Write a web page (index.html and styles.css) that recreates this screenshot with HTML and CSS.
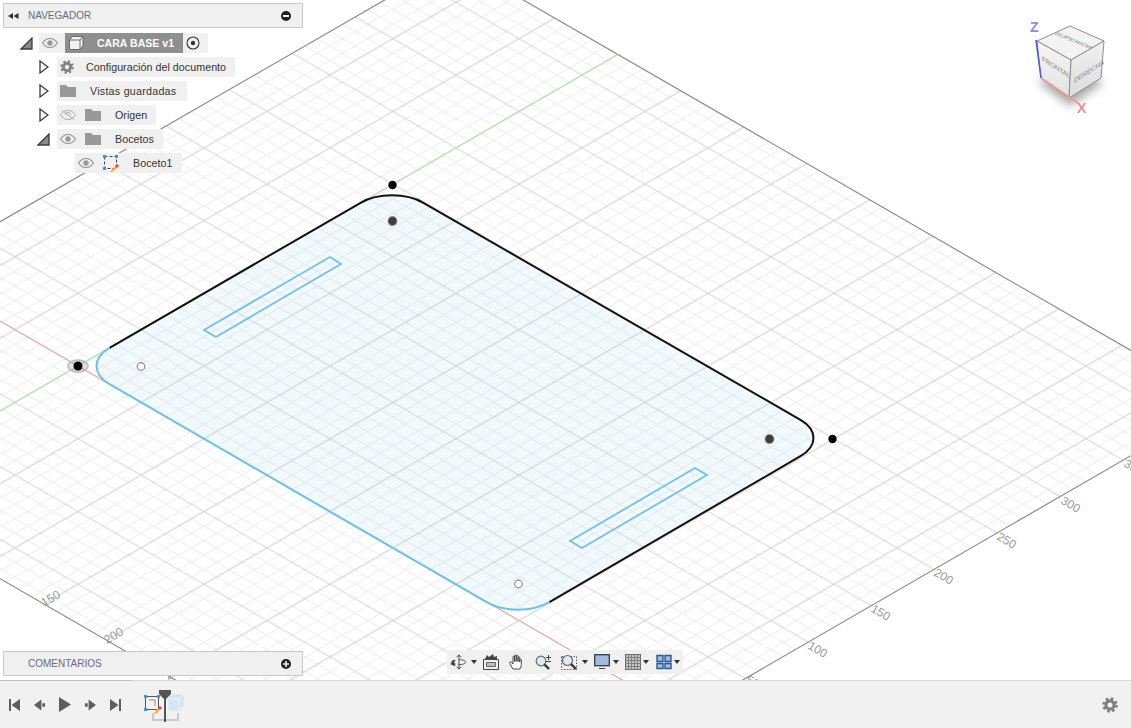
FILE: index.html
```html
<!DOCTYPE html>
<html lang="es">
<head>
<meta charset="utf-8">
<title>CARA BASE v1</title>
<link rel="stylesheet" href="styles.css">
</head>
<body>
<div class="app">
  <main class="viewport">
    <svg class="scene" viewBox="0 0 1131 680" xmlns="http://www.w3.org/2000/svg">
      <defs>
        <pattern id="grid" patternUnits="userSpaceOnUse" width="50" height="50" patternTransform="matrix(1.26 .7274 1.26 -.7274 78 366)">
          <path class="minor" d="M10 0V50M20 0V50M30 0V50M40 0V50M0 10H50M0 20H50M0 30H50M0 40H50"/>
          <path class="major" d="M0 0V50M50 0V50M0 0H50M0 50H50"/>
        </pattern>
      </defs>
      <polygon class="plane" points="-309,400 454,-40 1222,403 459,844"/>
      <polygon class="plane-edge" points="-309,400 454,-40 1222,403 459,844"/>
      <line class="axis-green" x1="-20" y1="422.5" x2="618" y2="54.5"/>
      <line class="axis-red" x1="-20" y1="309.5" x2="682" y2="714.5"/>
      <g class="grid-labels">
        <text transform="translate(44 607) rotate(-30)">150</text>
        <text transform="translate(107 644) rotate(-30)">200</text>
        <text transform="translate(168 680) rotate(-30)">250</text>
        <text transform="translate(807 648) rotate(30)">100</text>
        <text transform="translate(870 611) rotate(30)">150</text>
        <text transform="translate(933 575) rotate(30)">200</text>
        <text transform="translate(996 539) rotate(30)">250</text>
        <text transform="translate(1060 503) rotate(30)">300</text>
        <text transform="translate(1123 466) rotate(30)">350</text>
        <text transform="translate(745 682) rotate(30)">50</text>
      </g>
      <path class="sheet" d="M360.6 202.8A44.5 25.7 0 0 1 423.4 202.8L800.4 419.8A44.5 25.7 0 0 1 800.4 456.2L549.4 602.2A44.5 25.7 0 0 1 486.6 602.2L109.6 384.2A44.5 25.7 0 0 1 109.6 347.8Z"/>
      <path class="edge-black" d="M109.6 347.8L360.6 202.8A44.5 25.7 0 0 1 423.4 202.8L800.4 419.8A44.5 25.7 0 0 1 800.4 456.2L549.4 602.2"/>
      <path class="edge-blue" d="M549.4 602.2A44.5 25.7 0 0 1 486.6 602.2L109.6 384.2A44.5 25.7 0 0 1 109.6 347.8"/>
      <polygon class="slot" points="330,257 341,264 216,337 204,330"/>
      <polygon class="slot" points="695,468 707,475 582,548 570,541"/>
      <ellipse class="halo" cx="78" cy="366" rx="10" ry="6"/>
      <circle class="pt-black" cx="78" cy="366" r="4.500"/>
      <circle class="pt-black" cx="392.500" cy="185" r="4.200"/>
      <circle class="pt-black" cx="832.500" cy="439" r="4.200"/>
      <circle class="pt-dark" cx="392.500" cy="221" r="4.500"/>
      <circle class="pt-dark" cx="769.500" cy="439" r="4.500"/>
      <circle class="pt-open" cx="141" cy="366.500" r="3.800"/>
      <circle class="pt-open" cx="518.500" cy="584" r="3.800"/>
    </svg>

    <svg class="viewcube" viewBox="0 0 121 110" xmlns="http://www.w3.org/2000/svg">
      <defs>
        <linearGradient id="faceL" x1="0" y1="0" x2="0" y2="1"><stop offset="0" stop-color="#f6f6f6"/><stop offset="1" stop-color="#e2e2e2"/></linearGradient>
        <linearGradient id="faceR" x1="0" y1="0" x2="0" y2="1"><stop offset="0" stop-color="#f1f1f1"/><stop offset="1" stop-color="#dcdcdc"/></linearGradient>
        <filter id="cubeShadow" x="-40%" y="-40%" width="180%" height="180%"><feGaussianBlur stdDeviation="5"/></filter>
      </defs>
      <polygon class="cube-shadow" filter="url(#cubeShadow)" points="28,72 60,96 94,72 60,58"/>
      <polygon class="cube-face" fill="#f3f3f3" points="60,16 94,31 61,50 27,31"/>
      <polygon class="cube-face" fill="url(#faceL)" points="27,31 61,50 59,88 31,68"/>
      <polygon class="cube-face" fill="url(#faceR)" points="61,50 94,31 91,68 59,88"/>
      <text class="cube-text" transform="matrix(1 .42 -.7 .42 44 24)">SUPERIOR</text>
      <text class="cube-text" transform="matrix(.88 .55 0 1 32 51)">FRONTAL</text>
      <text class="cube-text" transform="matrix(.88 -.55 0 1 64 73)">DERECHA</text>
      <line class="cube-z" x1="26" y1="30" x2="31" y2="68"/>
      <line class="cube-x" x1="31" y1="68" x2="68" y2="93"/>
      <text class="cube-zl" x="20" y="22">Z</text>
      <text class="cube-xl" x="67" y="103">X</text>
    </svg>

    <section class="panel panel-nav">
      <svg class="ico-back" viewBox="0 0 11 6"><path d="M0 3 5 0V6ZM5.500 3 10.500 0V6Z"/></svg>
      <span class="panel-title">NAVEGADOR</span>
      <svg class="ico-round" viewBox="0 0 10 10"><circle cx="5" cy="5" r="5"/><rect class="ico-sign" x="2" y="4" width="6" height="2"/></svg>
    </section>

    <nav class="tree">
      <div class="tree-line">
        <svg class="tw tw-open" viewBox="0 0 13 13"><path d="M1 12 12 12 12 1Z"/></svg>
        <div class="node node-root">
          <svg class="eye" viewBox="0 0 16 10"><path d="M.5 5C3 1.500 5.500.5 8 .5S13 1.500 15.500 5C13 8.500 10.500 9.500 8 9.500S3 8.500.5 5Z"/><circle cx="8" cy="5" r="2.700"/></svg>
          <div class="root-label">
            <svg class="cube" viewBox="0 0 16 14"><path class="cube-out" d="M4.500.5H15V10L12 13.500H1.500V4Z"/><path class="cube-in" d="M1.500 4H12V13.500M12 4 15 .5"/></svg>
            <span>CARA BASE v1</span>
          </div>
          <svg class="target" viewBox="0 0 14 14"><circle cx="7" cy="7" r="6"/><circle class="target-dot" cx="7" cy="7" r="2.200"/></svg>
        </div>
      </div>
      <div class="tree-line lvl1">
        <svg class="tw tw-closed" viewBox="0 0 10 14"><path d="M1 1 9 7 1 13Z"/></svg>
        <div class="node">
          <svg class="gear" viewBox="0 0 14 14"><circle class="gear-teeth" cx="7" cy="7" r="5.600"/><circle class="gear-body" cx="7" cy="7" r="3.600"/></svg>
          <span class="label label-doc">Configuración del documento</span>
        </div>
      </div>
      <div class="tree-line lvl1">
        <svg class="tw tw-closed" viewBox="0 0 10 14"><path d="M1 1 9 7 1 13Z"/></svg>
        <div class="node">
          <svg class="folder" viewBox="0 0 16 12"><path d="M0 0H6L8 2H16V12H0Z"/></svg>
          <span class="label label-saved">Vistas guardadas</span>
        </div>
      </div>
      <div class="tree-line lvl1">
        <svg class="tw tw-closed" viewBox="0 0 10 14"><path d="M1 1 9 7 1 13Z"/></svg>
        <div class="node">
          <svg class="eye eye-off" viewBox="0 0 16 10"><path d="M.5 5C3 1.500 5.500.5 8 .5S13 1.500 15.500 5C13 8.500 10.500 9.500 8 9.500S3 8.500.5 5Z"/><path d="M5.500 5A2.500 2.500 0 0 1 10.500 5M2 .5 14 9.500"/></svg>
          <svg class="folder folder-after-eye" viewBox="0 0 16 12"><path d="M0 0H6L8 2H16V12H0Z"/></svg>
          <span class="label label-folder">Origen</span>
        </div>
      </div>
      <div class="tree-line lvl1">
        <svg class="tw tw-open" viewBox="0 0 13 13"><path d="M1 12 12 12 12 1Z"/></svg>
        <div class="node">
          <svg class="eye" viewBox="0 0 16 10"><path d="M.5 5C3 1.500 5.500.5 8 .5S13 1.500 15.500 5C13 8.500 10.500 9.500 8 9.500S3 8.500.5 5Z"/><circle cx="8" cy="5" r="2.700"/></svg>
          <svg class="folder folder-after-eye" viewBox="0 0 16 12"><path d="M0 0H6L8 2H16V12H0Z"/></svg>
          <span class="label label-folder">Bocetos</span>
        </div>
      </div>
      <div class="tree-line lvl2">
        <div class="node">
          <svg class="eye" viewBox="0 0 16 10"><path d="M.5 5C3 1.500 5.500.5 8 .5S13 1.500 15.500 5C13 8.500 10.500 9.500 8 9.500S3 8.500.5 5Z"/><circle cx="8" cy="5" r="2.700"/></svg>
          <svg class="sk" viewBox="0 0 17 17"><rect class="sk-box" x="1.500" y="1.500" width="12" height="12"/><path class="sk-c" d="M0 0H3V3H0ZM12 0H15V3H12ZM0 12H3V15H0Z"/><path class="sk-pen" d="M7 17 12 11 14 13 9 17Z"/><path class="sk-tip" d="M12 11 14 9 16 11 14 13Z"/></svg>
          <span class="label label-sk">Boceto1</span>
        </div>
      </div>
    </nav>

    <section class="panel panel-com">
      <span class="panel-title">COMENTARIOS</span>
      <svg class="ico-round" viewBox="0 0 10 10"><circle cx="5" cy="5" r="5"/><path class="ico-sign" d="M4.200 2H5.800V4.200H8V5.800H5.800V8H4.200V5.800H2V4.200H4.200Z"/></svg>
    </section>

    <div class="toolbar">
      <svg class="tool w17 gap-4" viewBox="0 0 17 17"><path class="t-line" d="M9 1V16M6.500 3.500 9 1 11.500 3.500M6.500 13.500 9 16 11.500 13.500M9 6C13 6 16 7 16 8.500 16 10 13 11.500 8 11.500"/><path class="t-fill" d="M1 8.500C1 7.500 2.500 6.500 5 6.200V8C4 8.200 3.500 8.400 3.200 8.700L5 9.500V13L0 11Z"/></svg>
      <svg class="caret gap-6" viewBox="0 0 6 4"><path d="M0 0H6L3 4Z"/></svg>
      <svg class="tool gap-10" viewBox="0 0 16 16"><path class="t-line" d="M.5 5.500H15.500V15.500H.5Z"/><path class="t-fill-gray" d="M3.500 8.500H12.500V12.500H3.500Z"/><path class="t-fill" d="M2 5 4 1 6 3 10 0 11 3 14 2 14 5Z"/></svg>
      <svg class="tool gap-10" viewBox="0 0 16 16"><path class="t-hand" d="M4 15C2 12 1 10 .8 8.500 .8 7.500 2 7.500 2.700 8.500L4 10V3C4 2 5.500 2 5.500 3V7.500V1.700C5.500.700 7.200.700 7.200 1.700V7.500V2C7.200 1 9 1 9 2V7.500V3.500C9 2.500 10.700 2.500 10.700 3.500V8 6C10.700 5 12.300 5 12.300 6V10.500C12.300 12.500 11.500 14 11 15Z"/></svg>
      <svg class="tool w17 gap-9" viewBox="0 0 17 16"><circle class="t-lens" cx="6" cy="7" r="4.800"/><path class="t-handle" d="M9.500 10.500 14 15"/><path class="t-line" d="M13.500 1V6M11 3.500H16M11 7.500H16"/></svg>
      <svg class="tool gap-5" viewBox="0 0 16 16"><path class="t-dash" d="M.5 2.500H15.500V15.500H.5Z"/><circle class="t-lens" cx="6.500" cy="6.500" r="5"/><path class="t-handle" d="M10 10 15 15"/></svg>
      <svg class="caret gap-6" viewBox="0 0 6 4"><path d="M0 0H6L3 4Z"/></svg>
      <svg class="tool gap-3" viewBox="0 0 16 16"><rect class="t-screen" x=".7" y=".7" width="14.600" height="11"/><path class="t-line" d="M5 14.500H11"/></svg>
      <svg class="caret gap-6" viewBox="0 0 6 4"><path d="M0 0H6L3 4Z"/></svg>
      <svg class="tool gap-2" viewBox="0 0 16 16"><rect class="t-gridbox" x=".5" y=".5" width="15" height="15"/><path class="t-gridlines" d="M3.500 0V16M6.500 0V16M9.500 0V16M12.500 0V16M0 3.500H16M0 6.500H16M0 9.500H16M0 12.500H16"/></svg>
      <svg class="caret gap-7" viewBox="0 0 6 4"><path d="M0 0H6L3 4Z"/></svg>
      <svg class="tool gap-2" viewBox="0 0 16 16"><path class="t-views" d="M1 1.500H7V7.500H1ZM9 1.500H15V7.500H9ZM1 9.500H7V14.500H1ZM9 9.500H15V14.500H9Z"/></svg>
      <svg class="caret" viewBox="0 0 6 4"><path d="M0 0H6L3 4Z"/></svg>
    </div>
  </main>

  <footer class="timeline">
    <div class="playback">
      <svg class="pb" viewBox="0 0 12 12"><path d="M0 0H2V12H0ZM2.500 6 11 0V12Z"/></svg>
      <svg class="pb" viewBox="0 0 13 12"><path d="M0 6 8 0V12ZM9 4H12V8H9Z"/></svg>
      <svg class="pb pb-play" viewBox="0 0 12 15"><path d="M0 0 12 7.500 0 15Z"/></svg>
      <svg class="pb" viewBox="0 0 13 12"><path d="M1 4H4V8H1ZM5 0 13 6 5 12Z"/></svg>
      <svg class="pb" viewBox="0 0 12 12"><path d="M1 0 9.500 6 1 12ZM10 0H12V12H10Z"/></svg>
    </div>
    <svg class="steps" viewBox="0 0 44 34">
      <path class="st-brace" d="M10 24V31H35V24"/>
      <rect class="st-sk" x="2.500" y="7.500" width="13" height="13"/>
      <path class="st-corner" d="M1 6H4V9H1ZM1 19H4V22H1ZM14 6H17V9H14Z"/>
      <path class="st-inner" d="M6 11H12V17"/>
      <path class="st-pen" d="M11 24 15 19 17 21 13 25Z"/>
      <path class="st-tip" d="M15 19 17 17 19 19 17 21Z"/>
      <path class="st-cube" d="M26 10 30 6H40V17L36 21H26Z"/>
      <path class="st-cube-in" d="M26 10H36V21M36 10 40 6"/>
      <path class="st-mark" d="M16 1H28V5L23 10V33H21V10L16 5Z"/>
    </svg>
    <svg class="gear gear-big" viewBox="0 0 14 14"><circle class="gear-teeth" cx="7" cy="7" r="5.600"/><circle class="gear-body" cx="7" cy="7" r="3.600"/></svg>
  </footer>
</div>
</body>
</html>
```

FILE: styles.css
```css
* { box-sizing: border-box; }

html, body {
  margin: 0;
  height: 100%;
  overflow: hidden;
  background: #fff;
  font-family: "Liberation Sans", Arial, sans-serif;
}

svg { display: block; flex: none; }

.app {
  display: flex;
  flex-direction: column;
  width: 1131px;
  height: 728px;
}

.viewport {
  position: relative;
  height: 680px;
  overflow: hidden;
}

/* ---------- 3D scene ---------- */
.scene { position: absolute; left: 0; top: 0; width: 1131px; height: 680px; }

.minor { fill: none; stroke: #eeeeee; stroke-width: .8; }
.major { fill: none; stroke: #cfcfcf; stroke-width: .8; }
.plane { fill: url(#grid); }
.plane-edge { fill: none; stroke: #8c8c8c; stroke-width: 1.2; }
.axis-green { stroke: #a3ec96; stroke-width: 1; }
.axis-red { stroke: #f29a9a; stroke-width: 1; }

.grid-labels text {
  font-size: 12px;
  fill: #999;
  font-family: "Liberation Sans", Arial, sans-serif;
}

.sheet { fill: rgba(172, 216, 243, .16); }
.edge-black { fill: none; stroke: #111; stroke-width: 2; }
.edge-blue { fill: none; stroke: #6ec1ea; stroke-width: 2; }
.slot { fill: none; stroke: #6ec1ea; stroke-width: 1.8; }
.halo { fill: rgba(0, 0, 0, .12); stroke: #bbb; stroke-width: 1.5; }
.pt-black { fill: #000; }
.pt-dark { fill: #3e3e3e; stroke: #8a8a8a; stroke-width: .8; }
.pt-open { fill: #fff; stroke: #8a8a8a; stroke-width: 1.2; }

/* ---------- view cube ---------- */
.viewcube { position: absolute; left: 1010px; top: 10px; width: 121px; height: 110px; }
.cube-shadow { fill: rgba(0, 0, 0, .34); }
.cube-face { stroke: #8d8d8d; stroke-width: 1; stroke-linejoin: round; }
.cube-text { font-size: 7px; fill: #858585; font-family: "Liberation Sans", Arial, sans-serif; }
.cube-z { stroke: #4e5ce0; stroke-width: 1.6; }
.cube-x { stroke: #ef9a9a; stroke-width: 2; }
.cube-zl { font-size: 14px; font-weight: 700; fill: #8a8cf5; font-family: "Liberation Sans", Arial, sans-serif; }
.cube-xl { font-size: 14px; font-weight: 700; fill: #ef8f8f; font-family: "Liberation Sans", Arial, sans-serif; }

/* ---------- side panels ---------- */
.panel {
  position: absolute;
  left: 3px;
  width: 300px;
  height: 25px;
  display: flex;
  align-items: center;
  background: #f0f0f0;
  border: 1px solid #c9c9c9;
  color: #666d78;
  font-size: 10px;
}
.panel-nav { top: 3px; padding: 0 11px 0 4px; }
.panel-com { top: 651px; padding: 0 11px 0 24px; }
.panel-title { flex: 1; }
.ico-back { width: 11px; height: 6px; margin-right: 9px; fill: #333; }
.ico-round { width: 10px; height: 10px; fill: #222; }
.ico-sign { fill: #f0f0f0; }

/* ---------- tree ---------- */
.tree {
  position: absolute;
  left: 20px;
  top: 33px;
  display: flex;
  flex-direction: column;
  gap: 4px;
  font-size: 10.700px;
  letter-spacing: .04px;
  color: #333;
}
.tree-line { display: flex; align-items: center; height: 20px; }
.lvl2 { margin-left: 55px; }

.tw { stroke: #3c3c3c; stroke-width: 1.300; }
.tw-open { width: 13px; height: 13px; fill: #8a8a8a; margin-right: 6px; }
.tree-line.lvl1 .tw-open { margin-left: 17px; margin-right: 7px; }
.tw-closed { width: 10px; height: 14px; fill: #f6f6f6; margin: 0 8px 0 19px; }

.node {
  display: flex;
  align-items: center;
  height: 20px;
  padding: 0 3px;
  background: #f0f0f0;
}
.node-root { padding: 0; }

.eye { width: 16px; height: 10px; fill: none; stroke: #9a9a9a; stroke-width: 1.2; }
.eye circle { fill: #9a9a9a; stroke: none; }
.eye-off { stroke-width: 1; stroke: #aaa; }
.node-root .eye { margin: 0 7px 0 3px; }

.root-label {
  display: flex;
  align-items: center;
  width: 118px;
  height: 20px;
  background: #8f8f8f;
  color: #fff;
  font-size: 10.500px;
  font-weight: 700;
}
.root-label span { margin-left: 13px; }
.cube { width: 16px; height: 14px; margin-left: 3px; }
.cube-out { fill: #f2f2f2; stroke: #6a6a6a; stroke-width: 1; }
.cube-in { fill: none; stroke: #6a6a6a; stroke-width: 1; }
.target { width: 14px; height: 14px; margin: 0 8px 0 3px; fill: none; stroke: #333; stroke-width: 1.100; }
.target-dot { fill: #333; stroke: none; }

.gear { width: 14px; height: 14px; }
.gear-teeth { fill: none; stroke: #808080; stroke-width: 2.400; stroke-dasharray: 2.200 2.200; }
.gear-body { fill: none; stroke: #808080; stroke-width: 2.800; }
.folder { width: 16px; height: 12px; fill: #999; }
.folder-after-eye { margin-left: 9px; }
.sk { width: 17px; height: 17px; margin-left: 9px; }
.sk-box { fill: none; stroke: #444; stroke-width: 1; stroke-dasharray: 3 2; }
.sk-c { fill: #2e9be6; }
.sk-pen { fill: #f2b035; }
.sk-tip { fill: #e8443a; }

.label-doc { margin: 0 6px 0 12px; }
.label-saved { margin: 0 8px 0 14px; letter-spacing: .25px; }
.label-folder { margin: 0 6px 0 14px; }
.label-sk { margin: 0 6px 0 13px; }

/* ---------- view toolbar ---------- */
.toolbar {
  position: absolute;
  left: 447px;
  top: 650px;
  height: 24px;
  display: flex;
  align-items: center;
  padding: 0 3px;
  background: #f0f0f0;
}
.tool { width: 16px; height: 16px; }
.w17 { width: 17px; }
.caret { width: 6px; height: 4px; fill: #333; }
.gap-2 { margin-right: 2px; }
.gap-3 { margin-right: 3px; }
.gap-4 { margin-right: 4px; }
.gap-5 { margin-right: 5px; }
.gap-6 { margin-right: 6px; }
.gap-7 { margin-right: 7px; }
.gap-9 { margin-right: 9px; }
.gap-10 { margin-right: 10px; }
.t-line { fill: none; stroke: #444; stroke-width: 1; }
.t-fill { fill: #444; }
.t-fill-gray { fill: #bbb; stroke: #666; stroke-width: 1; }
.t-hand { fill: #fff; stroke: #444; stroke-width: 1; stroke-linejoin: round; }
.t-lens { fill: #dcecf2; stroke: #666; stroke-width: 1.200; }
.t-handle { stroke: #333; stroke-width: 2.400; }
.t-dash { fill: none; stroke: #555; stroke-width: 1; stroke-dasharray: 1.500 1.500; }
.t-screen { fill: #9dbde3; stroke: #444; stroke-width: 1.400; }
.t-gridbox { fill: #c4c4c4; stroke: #666; stroke-width: 1; }
.t-gridlines { fill: none; stroke: #808080; stroke-width: 1; }
.t-views { fill: #9dbde3; stroke: #2c5a90; stroke-width: 1.400; }

/* ---------- timeline ---------- */
.timeline {
  display: flex;
  align-items: center;
  height: 48px;
  padding: 0 13px 0 9px;
  background: #f1f1f1;
  border-top: 1px solid #d8d8d8;
  border-image: linear-gradient(to right, #bdbdbd 133px, #d8d8d8 133px) 1;
}
.playback { display: flex; align-items: center; gap: 13px; }
.pb { width: 12px; height: 12px; fill: #5e5e5e; }
.pb-play { height: 15px; }
.steps { width: 44px; height: 34px; margin: 3px 0 0 22px; }
.st-brace { fill: none; stroke: #c9c9c9; stroke-width: 2; }
.st-sk { fill: #f2f2f2; stroke: #555; stroke-width: 1; }
.st-corner { fill: #2e9be6; }
.st-inner { fill: none; stroke: #888; stroke-width: 1; }
.st-pen { fill: #f2b035; }
.st-tip { fill: #e8443a; }
.st-cube { fill: #d5e6f3; stroke: #d6dfe6; stroke-width: 1; }
.st-cube-in { fill: none; stroke: #eef4f8; stroke-width: 1; }
.st-mark { fill: #555; }
.gear-big { width: 16px; height: 16px; margin-left: auto; }
```
